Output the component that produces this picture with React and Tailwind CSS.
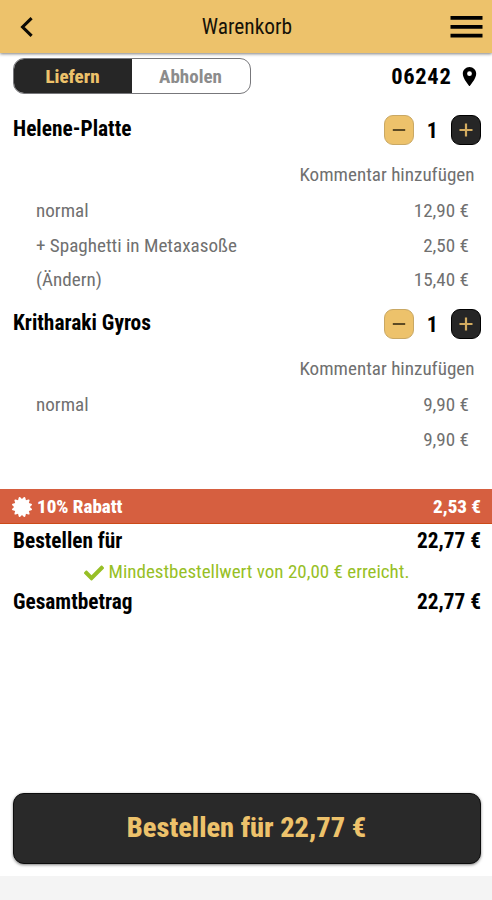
import React, { useState } from "react";
import { FaCheck, FaCertificate } from "react-icons/fa";
import { MdLocationOn } from "react-icons/md";

const items = [
  {
    name: "Helene-Platte",
    lines: [
      { label: "normal", price: "12,90 €" },
      { label: "+ Spaghetti in Metaxasoße", price: "2,50 €" },
      { label: "(Ändern)", price: "15,40 €" },
    ],
  },
  {
    name: "Kritharaki Gyros",
    lines: [
      { label: "normal", price: "9,90 €" },
      { label: "", price: "9,90 €" },
    ],
  },
];

const Header = () => {
  return (
    <header className="flex h-[53px] shrink-0 items-center justify-between bg-[#edc26b] pl-5 pr-[9px] pt-px shadow-[0_1px_3px_rgba(0,0,0,0.5)]">
      <button className="w-[13px]" aria-label="Zurück">
        <svg width="13" height="20" viewBox="0 0 13 20" fill="none">
          <path d="M11.6 1.2 2.6 10l9 8.8" stroke="#0c0a05" strokeWidth="3.1" />
        </svg>
      </button>
      <h1 className="pl-[11px] text-[21.4px] text-[#161208]">Warenkorb</h1>
      <button aria-label="Menü">
        <svg width="33" height="22" viewBox="0 0 33 22">
          <path d="M.5 0h32v3.8H.5zM.5 8.9h32v3.8H.5zM.5 17.8h32v3.8H.5z" />
        </svg>
      </button>
    </header>
  );
};

const Item = ({ data }) => {
  const [count, setCount] = useState(1);
  return (
    <section className="pl-[13px] pr-[11.5px]">
      <div className="flex h-[53px] items-center justify-between">
        <h2 className="pb-0.5 text-[21.4px] font-bold">{data.name}</h2>
        <div className="flex items-center">
          <button
            className="flex size-[30px] items-center justify-center rounded-[9px] border border-[#c9a864] bg-[#edc26b]"
            onClick={() => setCount(Math.max(1, count - 1))}
          >
            <svg width="14" height="14" viewBox="0 0 14 14">
              <path d="M.8 7h12.4" stroke="#5c4a24" strokeWidth="2" />
            </svg>
          </button>
          <span className="w-[36.5px] text-center text-[22px] font-bold">
            {count}
          </span>
          <button
            className="flex size-[30px] items-center justify-center rounded-[9px] border border-black bg-[#262626]"
            onClick={() => setCount(count + 1)}
          >
            <svg width="14" height="14" viewBox="0 0 14 14">
              <path d="M0.5 7h13M7 0.5v13" stroke="#d3ac60" strokeWidth="2.2" />
            </svg>
          </button>
        </div>
      </div>
      <div className="flex h-[37.5px] items-center justify-end pr-1.5 pt-px text-[19.1px] text-[#707070]">
        Kommentar hinzufügen
      </div>
      {data.lines.map((line, i) => (
        <div
          key={i}
          className="flex h-[34.5px] items-center justify-between pl-[23px] pr-[11.5px] pt-px text-[19.1px] text-[#707070]"
        >
          <span>{line.label}</span>
          <span>{line.price}</span>
        </div>
      ))}
    </section>
  );
};

export default function App() {
  return (
    <div className="flex h-[900px] w-[492px] flex-col overflow-hidden bg-white font-['Roboto_Condensed','Roboto',sans-serif] text-black [font-stretch:75%]">
      <Header />
      <div className="flex h-[50.5px] items-center justify-between pl-[12.5px] pr-[11.5px] pb-1">
        <div className="flex h-9 w-[238px] overflow-hidden rounded-[11px] border border-[#77777b] text-[19px] font-bold">
          <button className="flex w-[118px] items-center justify-center bg-[#262626] pt-px font-extrabold text-[#edc26b]">
            Liefern
          </button>
          <button className="flex flex-1 items-center justify-center pt-px text-[#8c8c8c]">
            Abholen
          </button>
        </div>
        <div className="flex items-center gap-1.5 pt-px text-[22.5px] font-bold tracking-[0.7px]">
          06242
          <MdLocationOn className="size-[23px]" />
        </div>
      </div>
      {items.map((item) => (
        <Item key={item.name} data={item} />
      ))}
      <div className="mt-8 flex h-[35px] items-center justify-between border-b border-[#cc4a18] bg-[#d65f40] pl-3 pr-[11px] pt-0.5 text-[19px] font-extrabold text-white">
        <span className="flex items-center gap-[5px]">
          <FaCertificate className="size-5" />
          10% Rabatt
        </span>
        <span>2,53 €</span>
      </div>
      <div className="flex h-[34px] items-center justify-between pl-[13px] pr-[11px] text-[21.3px] font-bold">
        <span>Bestellen für</span>
        <span>22,77 €</span>
      </div>
      <div className="flex h-[27px] items-center justify-center gap-[5px] pl-px pt-0.5 text-[19px] text-[#97bf26]">
        <FaCheck className="size-5" />
        Mindestbestellwert von 20,00 € erreicht.
      </div>
      <div className="flex h-[34px] items-center justify-between pl-[13px] pr-[11px] text-[21.3px] font-bold">
        <span>Gesamtbetrag</span>
        <span>22,77 €</span>
      </div>
      <div className="mt-auto pl-[12.5px] pr-[11.5px] pb-3">
        <button className="h-[71px] w-full rounded-[11px] border border-[#0c0c0c] bg-[#292929] text-[28.4px] font-extrabold text-[#edc26b] shadow-[0_1px_3px_rgba(0,0,0,0.5)]">
          Bestellen für 22,77 €
        </button>
      </div>
      <div className="h-6 bg-[#f4f4f4]"></div>
    </div>
  );
}
